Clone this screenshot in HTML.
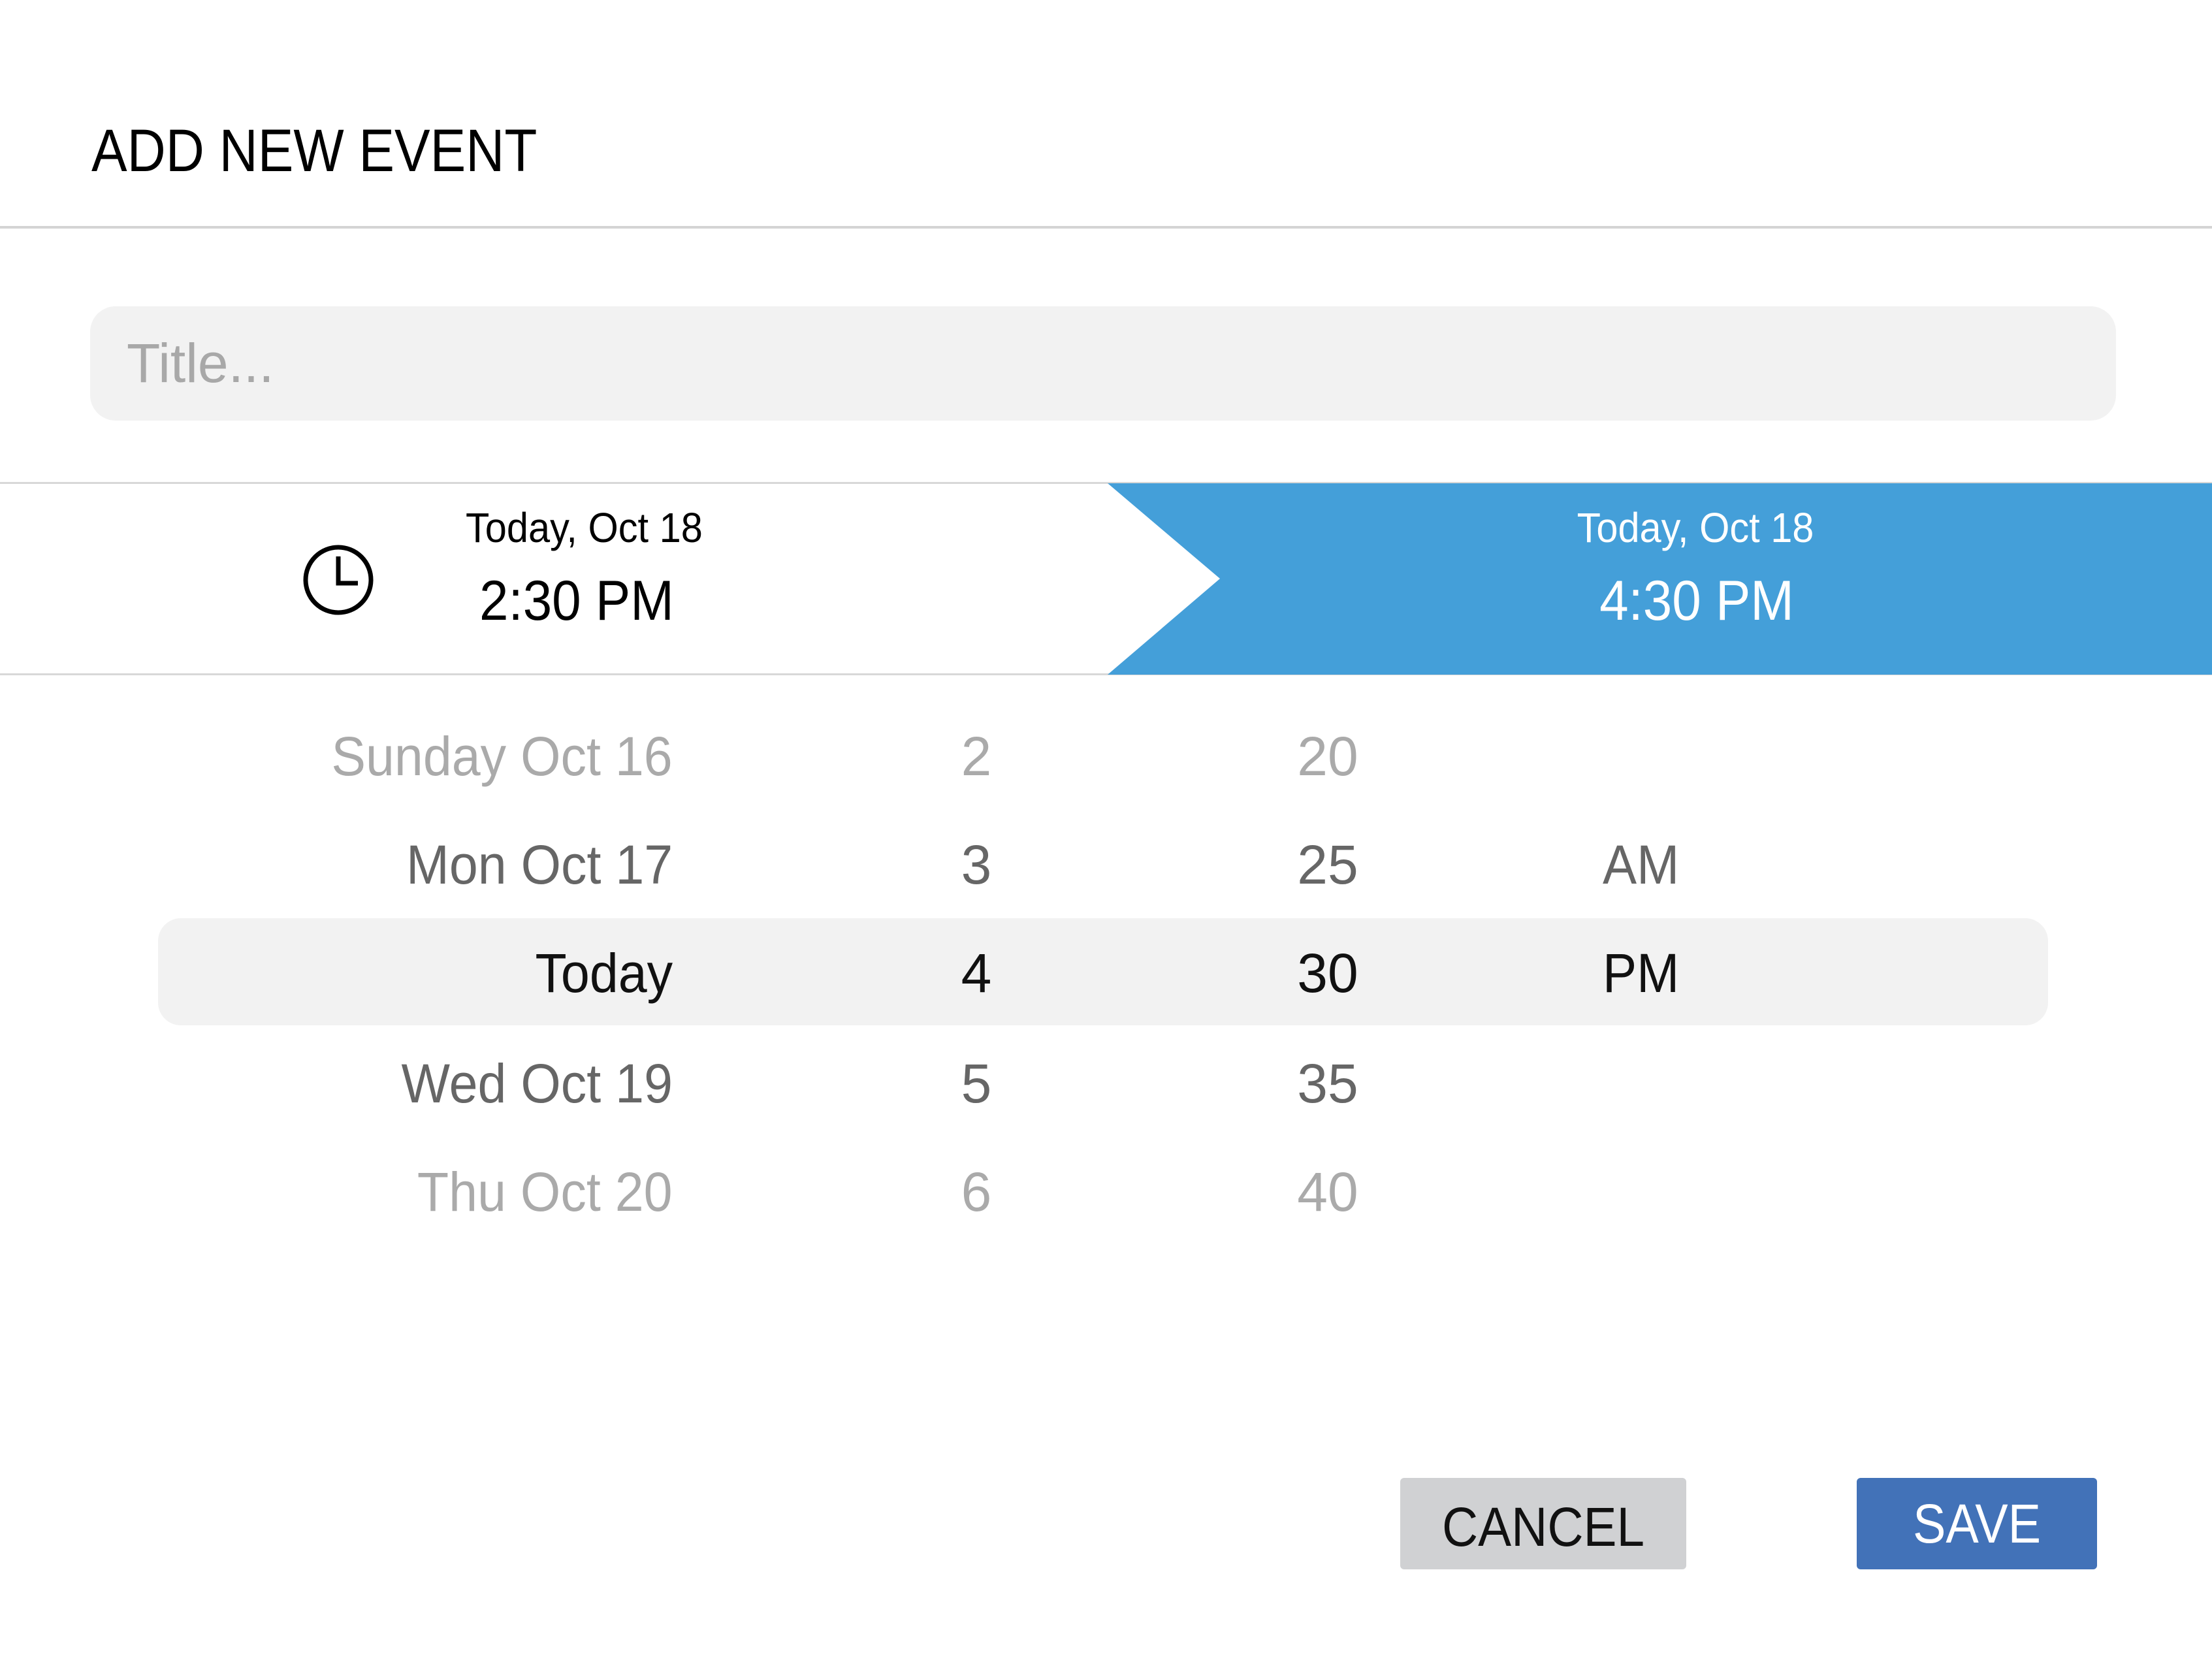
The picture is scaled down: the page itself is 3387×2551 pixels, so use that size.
<!DOCTYPE html>
<html><head><style>
body{margin:0;width:3387px;height:2551px;background:#fff;position:relative;overflow:hidden;font-family:"Liberation Sans",sans-serif;}
.a{position:absolute;white-space:nowrap;}
.r{position:absolute;font-size:84px;line-height:100px;height:100px;}
.rr{transform:scaleX(0.94);transform-origin:right center;}
.ll{transform:scaleX(0.93);transform-origin:left center;}
.cc{transform:scaleX(0.93);transform-origin:center center;}
</style></head><body>
<div class="a ll" style="left:140px;top:176px;font-size:92px;line-height:110px;color:#000;transform:scaleX(0.89);">ADD NEW EVENT</div>
<div class="a" style="left:0;top:346px;width:3387px;height:4px;background:#d4d4d4;"></div>
<div class="a" style="left:138px;top:469px;width:3102px;height:175px;background:#f2f2f2;border-radius:39px;"></div>
<div class="a" style="left:194px;top:506px;font-size:84px;line-height:100px;color:#a8a8a8;">Title...</div>
<div class="a" style="left:0;top:738px;width:3387px;height:3px;background:#d8d8d8;"></div>
<div class="a" style="left:0;top:1031px;width:3387px;height:3px;background:#d8d8d8;"></div>
<svg class="a" style="left:0;top:0" width="3387" height="2551">
<polygon points="1696,740 3387,740 3387,1033 1696,1033 1868,886" fill="#449fd9"/>
<circle cx="518" cy="888" r="50" fill="none" stroke="#000" stroke-width="7"/>
<path d="M518 852 V893 H548" fill="none" stroke="#000" stroke-width="7"/>
</svg>
<div class="a ll" style="left:713px;top:770px;font-size:64px;line-height:76px;color:#000;">Today, Oct 18</div>
<div class="a ll" style="left:734px;top:870px;font-size:86px;line-height:100px;color:#000;">2:30 PM</div>
<div class="a cc" style="left:2396px;width:400px;text-align:center;top:770px;font-size:64px;line-height:76px;color:#fff;">Today, Oct 18</div>
<div class="a cc" style="left:2398px;width:400px;text-align:center;top:870px;font-size:86px;line-height:100px;color:#fff;">4:30 PM</div>
<div class="a" style="left:242px;top:1406px;width:2894px;height:164px;background:#f2f2f2;border-radius:35px;"></div>
<div class="r rr" style="right:2357px;top:1108px;color:#aaa;">Sunday Oct 16</div>
<div class="r rr" style="right:2357px;top:1274px;color:#666;">Mon Oct 17</div>
<div class="r rr" style="right:2357px;top:1440px;color:#111;">Today</div>
<div class="r rr" style="right:2357px;top:1609px;color:#666;">Wed Oct 19</div>
<div class="r rr" style="right:2357px;top:1775px;color:#aaa;">Thu Oct 20</div>
<div class="r" style="left:1395px;width:200px;text-align:center;top:1108px;color:#aaa;">2</div>
<div class="r" style="left:1395px;width:200px;text-align:center;top:1274px;color:#666;">3</div>
<div class="r" style="left:1395px;width:200px;text-align:center;top:1440px;color:#111;">4</div>
<div class="r" style="left:1395px;width:200px;text-align:center;top:1609px;color:#666;">5</div>
<div class="r" style="left:1395px;width:200px;text-align:center;top:1775px;color:#aaa;">6</div>
<div class="r" style="left:1933px;width:200px;text-align:center;top:1108px;color:#aaa;">20</div>
<div class="r" style="left:1933px;width:200px;text-align:center;top:1274px;color:#666;">25</div>
<div class="r" style="left:1933px;width:200px;text-align:center;top:1440px;color:#111;">30</div>
<div class="r" style="left:1933px;width:200px;text-align:center;top:1609px;color:#666;">35</div>
<div class="r" style="left:1933px;width:200px;text-align:center;top:1775px;color:#aaa;">40</div>
<div class="r ll" style="left:2454px;top:1274px;color:#666;">AM</div>
<div class="r ll" style="left:2454px;top:1440px;color:#111;">PM</div>
<div class="a" style="left:2144px;top:2263px;width:438px;height:140px;background:#d0d1d3;border-radius:6px;"></div>
<div class="a cc" style="left:2144px;top:2263px;width:438px;height:140px;text-align:center;line-height:150px;font-size:84px;color:#111;transform:scaleX(0.91);">CANCEL</div>
<div class="a" style="left:2843px;top:2263px;width:368px;height:140px;background:#4272b8;border-radius:6px;"></div>
<div class="a cc" style="left:2843px;top:2263px;width:368px;height:140px;text-align:center;line-height:140px;font-size:84px;color:#fff;transform:scaleX(0.9);">SAVE</div>
</body></html>
